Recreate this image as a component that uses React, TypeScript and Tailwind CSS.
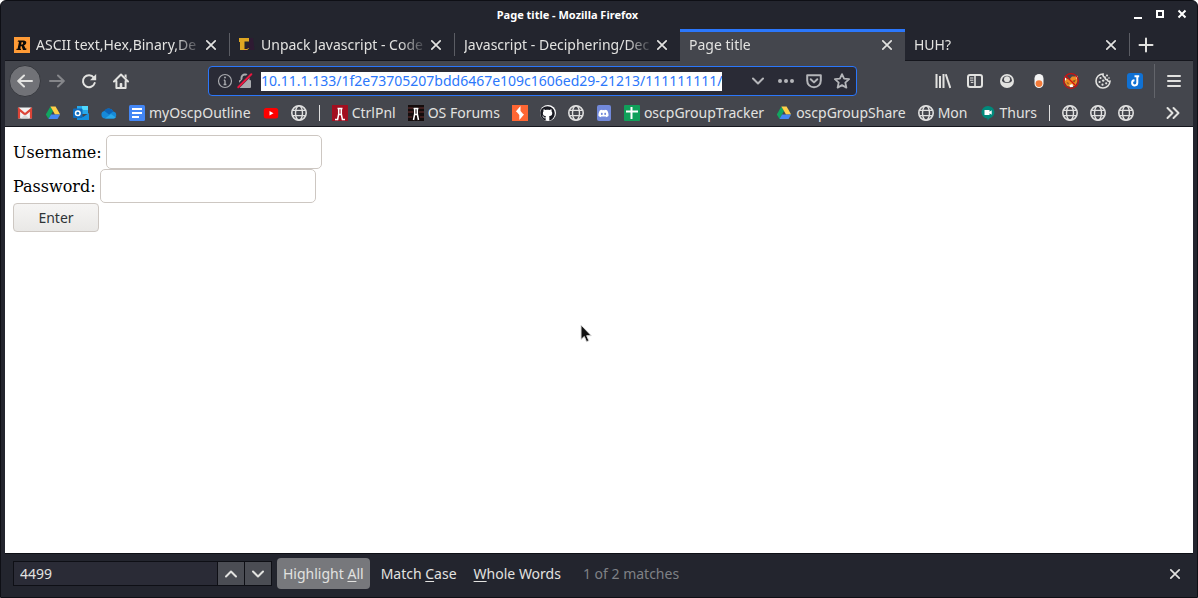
import React from 'react';
import { FaDiscord, FaGithub } from 'react-icons/fa';

function Svg({ size = 16, className = '', children }: { size?: number; className?: string; children: React.ReactNode }) {
  return (
    <svg width={size} height={size} viewBox="0 0 16 16" fill="none" aria-hidden="true" className={`shrink-0 ${className}`}>
      {children}
    </svg>
  );
}

const line = { stroke: 'currentColor', strokeWidth: 2, strokeLinecap: 'round' as const, strokeLinejoin: 'round' as const };

const CloseIcon = () => (
  <Svg><path d="M3.8 3.8l8.4 8.4M12.2 3.8l-8.4 8.4" {...line} strokeWidth={1.7} /></Svg>
);
const BackIcon = () => (
  <Svg><path d="M15 8H1.8M7 2.5L1.2 8 7 13.5" {...line} /></Svg>
);
const ForwardIcon = () => (
  <Svg><path d="M1 8h13.2M9 2.5L14.8 8 9 13.5" {...line} /></Svg>
);
const ReloadIcon = () => (
  <Svg>
    <path d="M12.8 4.6A6 6 0 1 0 13.7 10" {...line} />
    <path d="M15.2 1v6.2H9z" fill="currentColor" />
  </Svg>
);
const HomeIcon = () => (
  <Svg>
    <path d="M1 8.5L8 1.5l7 7M3.4 8v7h9.2V8" {...line} />
    <path d="M11.6 1.5h2v4l-2-2z" fill="currentColor" />
    <path d="M6.7 15v-4.2c0-.5.4-.8.8-.8h1c.5 0 .8.3.8.8V15z" fill="currentColor" />
  </Svg>
);
const InfoIcon = () => (
  <Svg>
    <circle cx="8" cy="8" r="6.5" stroke="currentColor" strokeWidth="1.2" />
    <path d="M8 7.3V11.5M6.8 7.3H8M6.6 11.5h2.8" stroke="currentColor" strokeWidth="1.4" />
    <circle cx="8" cy="4.6" r="1" fill="currentColor" />
  </Svg>
);
const InsecureIcon = () => (
  <Svg>
    <path d="M4.5 7V5a3.5 3.5 0 0 1 7 0v2" stroke="currentColor" strokeWidth="2" />
    <rect x="2" y="7" width="12" height="8" rx="1" fill="currentColor" />
    <path d="M.5 14L13.5 1" stroke="#2a2b36" strokeWidth="4" />
    <path d="M1.3 14.3L14.3 1.3" stroke="#e8173f" strokeWidth="2" strokeLinecap="round" />
  </Svg>
);
const ChevronDown = () => (
  <Svg><path d="M3 5.5l5 5 5-5" {...line} /></Svg>
);
const ChevronUp = () => (
  <Svg><path d="M3 10.5l5-5 5 5" {...line} /></Svg>
);
const DotsIcon = () => (
  <Svg>
    <circle cx="2" cy="8" r="2" fill="currentColor" />
    <circle cx="8" cy="8" r="2" fill="currentColor" />
    <circle cx="14" cy="8" r="2" fill="currentColor" />
  </Svg>
);
const PocketIcon = () => (
  <Svg>
    <path d="M1.2 2.2h13.6v5.3c0 4-3 6.7-6.8 6.7S1.2 11.5 1.2 7.5z" {...line} />
    <path d="M4.7 6.2L8 9.4l3.3-3.2" {...line} />
  </Svg>
);
const StarIcon = () => (
  <Svg><path d="M8 1.1l2.1 4.6 5 .5-3.8 3.4 1.1 5L8 12.100l-4.400 2.500 1.100-5L.9 6.200l5-.5z" {...line} strokeWidth={1.8} /></Svg>
);
const LibraryIcon = () => (
  <Svg>
    <path d="M1.5 1v14M5 3v12M8.5 1v14" stroke="currentColor" strokeWidth="2" />
    <path d="M10.8 1.3L15.3 15" stroke="currentColor" strokeWidth="2" />
  </Svg>
);
const SidebarIcon = () => (
  <Svg>
    <rect x="1" y="2" width="14" height="12" rx="2" stroke="currentColor" strokeWidth="2" />
    <path d="M8 2v12" stroke="currentColor" strokeWidth="1.6" />
    <path d="M3 5h3.4M3 7.2h3.4M3.8 9.4h2.6" stroke="currentColor" strokeWidth="1" />
  </Svg>
);
const AccountIcon = () => (
  <Svg>
    <circle cx="8" cy="8" r="7" fill="currentColor" />
    <path d="M3 7.800a5 5 0 0 1 10 0c-1.200 3-8.800 3-10 0z" fill="#44464d" />
    <circle cx="8" cy="6.200" r="3" fill="currentColor" />
  </Svg>
);
const ToggleIcon = () => (
  <Svg>
    <rect x="3.5" y="1" width="9" height="14" rx="4.5" fill="#f4f4f4" />
    <circle cx="8" cy="10.6" r="3.4" fill="#f47b39" />
  </Svg>
);
const FoxBlockedIcon = () => (
  <Svg>
    <path d="M2 5l4.500 1.500L9 3.500h4l1.500-1V8l-2 4.500-4 1.500-4.500-1L1.500 9z" fill="#ee8a22" />
    <path d="M1.500 3.500l2 2.500-1.500 2zM12.500 2.500l2 1-.5 3zM6.500 12l3-1 .5 3-3 .3z" fill="#fff" />
    <path d="M3.500 9l2.500 1-1 1.500zM9 8l4-1.500-1.500 3z" fill="#8a5520" />
    <circle cx="8" cy="8" r="7.300" stroke="#cf1010" strokeWidth="1.200" />
    <path d="M3 3l10 10" stroke="#cf1010" strokeWidth="1.200" />
  </Svg>
);
const CookieIcon = () => (
  <Svg>
    <path d="M8 1a7 7 0 1 0 7 7.3c-1.500.4-2.600-.3-2.700-1.700-1.500.2-2.500-.8-2.200-2.200C8.500 4 7.700 2.700 8 1z" stroke="currentColor" strokeWidth="1.600" />
    <g fill="currentColor">
      <circle cx="5.500" cy="5" r="1.100" /><circle cx="8.200" cy="7.600" r="1.200" /><circle cx="4.600" cy="9" r="1.100" />
      <circle cx="7.500" cy="11.700" r="1.100" /><circle cx="11.200" cy="10.300" r="1.100" /><circle cx="12" cy="2.600" r="1" /><circle cx="14" cy="5" r=".8" />
    </g>
  </Svg>
);
const JoplinIcon = () => (
  <Svg>
    <rect width="16" height="16" rx="3" fill="#1071d3" />
    <path d="M7.500 3.200h4.700M10.300 3.200v6.600a2.600 2.600 0 1 1-2.800-2.600" stroke="#fff" strokeWidth="2" />
  </Svg>
);
const MenuIcon = () => (
  <Svg><path d="M2 3h12M2 8h12M2 13h12" {...line} /></Svg>
);
const GlobeIcon = () => (
  <Svg>
    <g stroke="#dedede" strokeWidth="1.400">
      <circle cx="8" cy="8" r="7.200" strokeWidth="1.600" />
      <ellipse cx="8" cy="8" rx="3.500" ry="7.200" />
      <path d="M1.500 5.400h13M1.500 10.600h13" />
    </g>
  </Svg>
);
const GmailIcon = () => (
  <Svg>
    <rect x="1" y="2.500" width="14" height="11" rx="1" fill="#f2f2f2" />
    <path d="M2 13.500V4.300l6 5 6-5v9.200" stroke="#dc4437" strokeWidth="2.200" />
    <path d="M3.500 13.500L8 9.500l4.500 4z" fill="#dadada" />
  </Svg>
);
const DriveIcon = () => (
  <Svg>
    <path d="M5.400 1.500L8 6 3.500 14 .8 9.600z" fill="#11a560" />
    <path d="M5.400 1.500h5.200l4.600 8.100H10z" fill="#ffcf48" />
    <path d="M6 9.600h9.200L12.500 14h-9z" fill="#4687f4" />
  </Svg>
);
const OutlookIcon = () => (
  <Svg>
    <path d="M4 1h11v8H4z" fill="#28a8ea" />
    <path d="M9 1h6v4H9z" fill="#50d9ff" />
    <path d="M4 8l6 4 6-4v7H4z" fill="#1490df" />
    <rect y="3.500" width="9.500" height="9.500" rx="1" fill="#0f6cbd" />
    <circle cx="4.800" cy="8.200" r="2.300" stroke="#fff" strokeWidth="1.500" />
  </Svg>
);
const OneDriveIcon = () => (
  <Svg>
    <path d="M4 13.500a3.800 3.800 0 0 1-.6-7.500A5 5 0 0 1 12.300 6.500a3.600 3.600 0 0 1 .3 7z" fill="#1689d8" />
    <path d="M3.400 6A5 5 0 0 1 12.300 6.500L8 9.500z" fill="#0c64b8" />
    <path d="M4 13.500l6-4.600 4.800 3.500c-.6.700-1.300 1.100-2.200 1.100z" fill="#28a8ea" />
  </Svg>
);
const DocsIcon = () => (
  <Svg>
    <rect width="16" height="16" rx="1.500" fill="#4386f5" />
    <path d="M3 4h10M3 8h10M3 12h7" stroke="#fff" strokeWidth="2" />
  </Svg>
);
const YouTubeIcon = () => (
  <Svg>
    <rect x=".8" y="3" width="14.400" height="10.400" rx="2.500" fill="#f00" />
    <path d="M6.500 5.900v4.600l4-2.300z" fill="#fff" />
  </Svg>
);
const TowerIcon = ({ red }: { red?: boolean }) => (
  <Svg>
    <rect width="16" height="16" fill={red ? '#a20f20' : '#140c0c'} />
    {!red && <path d="M0 3h5M11 3h5M0 7h5M11 7h5M0 12h4M12 12h4" stroke="#4d2424" strokeWidth="1.500" />}
    <path d="M5.500 3.500h5M6.700 4v5l-1.200 6M9.300 4v5l1.200 6M6 9.500h4" stroke="#fff" strokeWidth="1.500" />
    {red && <path d="M3 14.500h3M10 14.500h3" stroke="#fff" strokeWidth="1.500" />}
  </Svg>
);
const BurpIcon = () => (
  <Svg>
    <rect width="16" height="16" fill="#ff6633" />
    <path d="M8.500 1v5.500H3.800zM7.300 15V9.600H12z" fill="#fff" />
    <path d="M4 6h4.500l3.500 4H7.300z" fill="#fff" />
  </Svg>
);
const GithubIcon = () => (
  <span className="flex size-4 items-center justify-center rounded-full bg-white text-[#191a22]">
    <FaGithub size={15} aria-hidden="true" />
  </span>
);
const DiscordIcon = () => (
  <span className="flex size-4 items-center justify-center">
    <span className="flex h-4 w-3.5 items-center justify-center rounded-xs bg-[#7289da] text-white">
      <FaDiscord size={11} aria-hidden="true" />
    </span>
  </span>
);
const SheetsIcon = () => (
  <Svg>
    <rect width="16" height="16" rx="1" fill="#10a05a" />
    <path d="M2 6.500h12M7.500 2v12" stroke="#fff" strokeWidth="2" />
  </Svg>
);
const MeetIcon = () => (
  <Svg>
    <path d="M8 1a6.300 6.300 0 0 1 1.200 12.500L7.500 15.800v-2.200A6.300 6.300 0 0 1 8 1z" fill="#00897b" />
    <path d="M4.500 5h5v1.700l2.200-1.500v4.600L9.500 8.300V10h-5z" fill="#fff" />
  </Svg>
);
const RapidIcon = () => (
  <Svg>
    <rect width="16" height="16" fill="#ff9b36" />
    <path d="M4 3.500h5.500c4 0 3.300 4.200.5 4.800l1.500 3.200h1L12.200 13H9L7.500 9H6.800l-.6 2.700h1L6.900 13H2.300l.3-1.300h1L5 4.800H3.700z" fill="#0c0a08" />
    <path d="M7.700 5l-.6 2.600c2.400.2 2.700-2.600.6-2.600z" fill="#ff9b36" />
  </Svg>
);
const UnpackIcon = () => (
  <Svg>
    <path d="M0 1h10v3.500H5.500V13H1V5H0z" fill="#dfa722" />
    <path d="M10 1h4l1.500 12H11l-1-4-3 5H4.500L10 6z" fill="#2e1a32" />
    <path d="M5 12.500h3.500L9.500 11" stroke="#dfa722" strokeWidth="1" />
  </Svg>
);

type TabProps = { title: string; icon?: React.ReactNode; active?: boolean; sep?: boolean };

const tabs: TabProps[] = [
  { title: 'ASCII text,Hex,Binary,De', icon: <RapidIcon />, sep: true },
  { title: 'Unpack Javascript - Code', icon: <UnpackIcon />, sep: true },
  { title: 'Javascript - Deciphering/Dec' },
  { title: 'Page title', active: true },
  { title: 'HUH?', sep: true },
];

function Tab({ title, icon, active, sep }: TabProps) {
  return (
    <div className={`flex max-w-[225px] min-w-0 flex-[1000] ${active ? 'border-t-3 border-[#2b77fb] bg-[#44464d] pb-1' : 'border-b border-[#15161d]'}`}>
      <div className="flex min-w-0 flex-1 items-center pr-2.5 pl-[9px]">
        {icon && <span className="mr-1.5 shrink-0">{icon}</span>}
        <button
          type="button"
          role="tab"
          aria-selected={!!active}
          className="min-w-0 flex-1 overflow-hidden mask-r-from-[calc(100%-28px)] text-left whitespace-nowrap"
        >
          {title}
        </button>
        <button type="button" aria-label={`Close ${title}`} className="shrink-0">
          <CloseIcon />
        </button>
      </div>
      {sep && <div className="my-1 w-px bg-[#5b5d64]" />}
    </div>
  );
}

function ToolButton({ label, children, className = '' }: { label: string; children: React.ReactNode; className?: string }) {
  return (
    <button type="button" aria-label={label} className={`flex size-8 shrink-0 items-center justify-center ${className}`}>
      {children}
    </button>
  );
}

function Bookmark({ icon, label, name }: { icon: React.ReactNode; label?: string; name?: string }) {
  return (
    <a href="#" aria-label={label ?? name} className="flex shrink-0 items-center gap-1 px-1.5">
      {icon}
      {label && <span>{label}</span>}
    </a>
  );
}

const BookmarkSeparator = () => <div className="mx-1.5 h-4 w-px shrink-0 bg-[#dedede]" />;

export default function App() {
  return (
    <div className="flex min-h-screen flex-col overflow-hidden rounded-t-md border border-[#0e0f15] bg-[#23252e] px-1 font-['Noto_Sans',sans-serif] text-sm text-[#e2e2e0]">
      <header className="flex h-7 items-center">
        <h1 className="flex-1 text-center text-[11px] font-bold text-white">Page title - Mozilla Firefox</h1>
        <div className="flex items-center gap-1.5 pr-[3px] text-white">
          <button type="button" aria-label="Minimize">
            <Svg><path d="M4 11h8" stroke="currentColor" strokeWidth="2" /></Svg>
          </button>
          <button type="button" aria-label="Maximize">
            <Svg><rect x="5" y="4" width="6" height="6" stroke="currentColor" strokeWidth="2" /></Svg>
          </button>
          <button type="button" aria-label="Close window">
            <Svg><path d="M4.500 3.500l7 7M11.500 3.500l-7 7" stroke="currentColor" strokeWidth="2" /></Svg>
          </button>
        </div>
      </header>

      <div role="tablist" className="flex h-8 items-stretch">
        {tabs.map((tab) => (
          <Tab key={tab.title} {...tab} />
        ))}
        <div className="flex min-w-10 flex-1 items-center border-b border-[#15161d] pl-2">
          <button type="button" aria-label="New tab">
            <Svg><path d="M1.500 8h13M8 1.500v13" {...line} /></Svg>
          </button>
        </div>
      </div>

      <nav aria-label="Navigation" className="flex h-10 items-center bg-[#44464d] pr-[3px] pl-1">
        <ToolButton label="Back" className="rounded-full border border-[#36383e] bg-[#717277]"><BackIcon /></ToolButton>
        <ToolButton label="Forward" className="text-[#85868a]"><ForwardIcon /></ToolButton>
        <ToolButton label="Reload"><ReloadIcon /></ToolButton>
        <ToolButton label="Home"><HomeIcon /></ToolButton>
        <div className="w-[71px] shrink" />
        <div className="flex h-[30px] min-w-0 flex-1 items-center rounded-sm border border-[#2b77fb] bg-[#2a2b36] pr-1.5 pl-2 text-[#a9aaae]">
          <InfoIcon />
          <span className="mr-2 ml-1"><InsecureIcon /></span>
          <input
            aria-label="Address"
            defaultValue="10.11.1.133/1f2e73705207bdd6467e109c1606ed29-21213/111111111/"
            className="field-sizing-content h-[19px] min-w-0 bg-white text-[#2b77fb] outline-none"
          />
          <div className="ml-auto flex shrink-0 items-center gap-3 text-[#b4b5b9]">
            <button type="button" aria-label="Show history"><ChevronDown /></button>
            <button type="button" aria-label="Page actions"><DotsIcon /></button>
            <button type="button" aria-label="Save to Pocket"><PocketIcon /></button>
            <button type="button" aria-label="Bookmark this page"><StarIcon /></button>
          </div>
        </div>
        <div className="w-[70px] shrink" />
        <ToolButton label="Library"><LibraryIcon /></ToolButton>
        <ToolButton label="Sidebars"><SidebarIcon /></ToolButton>
        <ToolButton label="Account"><AccountIcon /></ToolButton>
        <ToolButton label="Toggle"><ToggleIcon /></ToolButton>
        <ToolButton label="Proxy off"><FoxBlockedIcon /></ToolButton>
        <ToolButton label="Cookies"><CookieIcon /></ToolButton>
        <ToolButton label="Web clipper"><JoplinIcon /></ToolButton>
        <div className="mx-[3px] h-[34px] w-px bg-[#63656b]" />
        <ToolButton label="Menu"><MenuIcon /></ToolButton>
      </nav>

      <nav aria-label="Bookmarks" className="flex h-[26px] items-center border-b border-[#15161d] bg-[#44464d] pr-3 pb-px pl-1.5 whitespace-nowrap">
        <Bookmark icon={<GmailIcon />} name="Gmail" />
        <Bookmark icon={<DriveIcon />} name="Drive" />
        <Bookmark icon={<OutlookIcon />} name="Outlook" />
        <Bookmark icon={<OneDriveIcon />} name="OneDrive" />
        <Bookmark icon={<DocsIcon />} label="myOscpOutline" />
        <Bookmark icon={<YouTubeIcon />} name="YouTube" />
        <Bookmark icon={<GlobeIcon />} name="Site" />
        <BookmarkSeparator />
        <Bookmark icon={<TowerIcon red />} label="CtrlPnl" />
        <Bookmark icon={<TowerIcon />} label="OS Forums" />
        <Bookmark icon={<BurpIcon />} name="Burp Suite" />
        <Bookmark icon={<GithubIcon />} name="GitHub" />
        <Bookmark icon={<GlobeIcon />} name="Site" />
        <Bookmark icon={<DiscordIcon />} name="Discord" />
        <Bookmark icon={<SheetsIcon />} label="oscpGroupTracker" />
        <Bookmark icon={<DriveIcon />} label="oscpGroupShare" />
        <Bookmark icon={<GlobeIcon />} label="Mon" />
        <Bookmark icon={<MeetIcon />} label="Thurs" />
        <BookmarkSeparator />
        <Bookmark icon={<GlobeIcon />} name="Site" />
        <Bookmark icon={<GlobeIcon />} name="Site" />
        <Bookmark icon={<GlobeIcon />} name="Site" />
        <button type="button" aria-label="More bookmarks" className="ml-auto">
          <Svg><path d="M2.500 3l5 5-5 5M8.500 3l5 5-5 5" {...line} /></Svg>
        </button>
      </nav>

      <main className="relative flex-1 bg-white p-2 font-['DejaVu_Serif',serif] text-base text-black">
        <form onSubmit={(e) => e.preventDefault()}>
          <div className="flex items-center gap-1">
            <label htmlFor="username" className="pt-0.5">Username:</label>
            <input id="username" type="text" className="h-[34px] w-[216px] rounded-[5px] border border-[#cdc7c2] px-2" />
          </div>
          <div className="flex items-center gap-1">
            <label htmlFor="password" className="pt-0.5">Password:</label>
            <input id="password" type="password" className="h-[34px] w-[216px] rounded-[5px] border border-[#cdc7c2] px-2" />
          </div>
          <button
            type="submit"
            className="block h-[29px] w-[86px] rounded-[4px] border border-[#cdc7c2] bg-linear-to-b from-[#f6f5f4] to-[#e9e8e6] font-['Noto_Sans',sans-serif] text-sm text-[#2e3436]"
          >
            Enter
          </button>
        </form>
        <svg width="14" height="20" viewBox="0 0 14 20" aria-hidden="true" className="absolute top-[197px] left-[575px]">
          <path d="M1 1v14.500l3.300-3 2.200 5.200 2.400-1-2.200-5h4.600z" fill="#111" stroke="#ddd" strokeWidth="1" />
        </svg>
      </main>

      <footer className="flex h-11 items-center border-t border-[#0e0f15] pr-2.5 pb-1 pl-2">
        <div className="flex h-[25px] items-stretch border border-[#0e0f15]">
          <input aria-label="Find in page" defaultValue="4499" className="w-[203px] bg-[#2a2b36] px-1.5 outline-none" />
          <button type="button" aria-label="Previous match" className="flex w-[27px] items-center justify-center border-l border-[#0e0f15] bg-[#4b4d54]">
            <ChevronUp />
          </button>
          <button type="button" aria-label="Next match" className="flex w-[27px] items-center justify-center border-l border-[#0e0f15] bg-[#4b4d54]">
            <ChevronDown />
          </button>
        </div>
        <div className="ml-[5px] flex h-[31px] items-stretch gap-[5px]">
          <button type="button" className="rounded-sm bg-[#77787c] px-1.5 underline-offset-2">
            Highlight <u>A</u>ll
          </button>
          <button type="button" className="px-1.5 underline-offset-2">Match <u>C</u>ase</button>
          <button type="button" className="px-1.5 underline-offset-2"><u>W</u>hole Words</button>
        </div>
        <span className="ml-4 text-[#7f8186]">1 of 2 matches</span>
        <button type="button" aria-label="Close find bar" className="ml-auto"><CloseIcon /></button>
      </footer>
    </div>
  );
}
